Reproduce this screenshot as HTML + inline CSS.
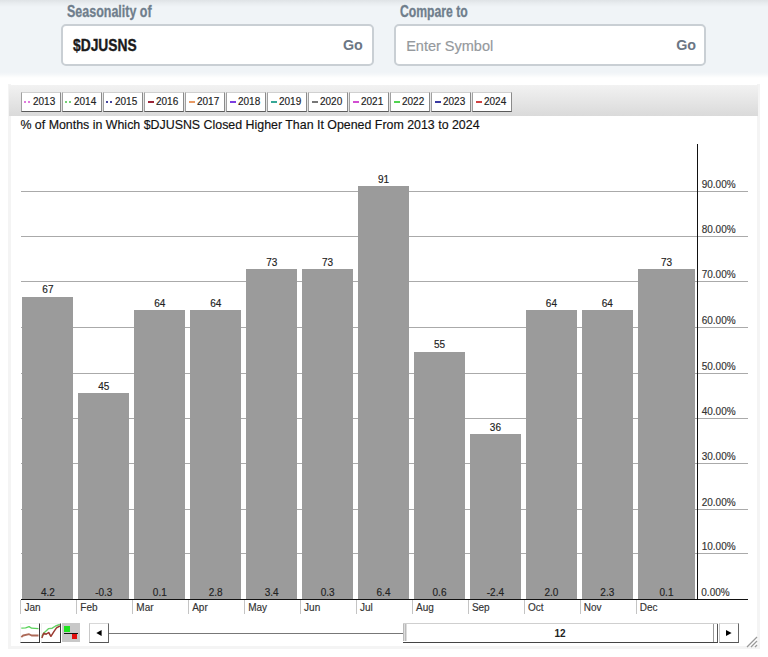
<!DOCTYPE html>
<html><head><meta charset="utf-8"><style>
*{margin:0;padding:0;box-sizing:border-box}
html,body{width:768px;height:657px;overflow:hidden;background:#fff;font-family:"Liberation Sans",sans-serif}
.a{position:absolute;white-space:nowrap;line-height:1}
.t{-webkit-text-stroke:0.15px currentColor}
</style></head><body>

<div class="a" style="left:0;top:0;width:768px;height:75px;background:linear-gradient(#dfe3e6 0px,#e9edf0 3.5px,#f0f4f7 7px,#f0f4f7 72px,#f6f8fa 75px)"></div>
<div class="a" style="left:0;top:75px;width:768px;height:3px;background:linear-gradient(#f7f9fa,#fff)"></div>
<div class="a" style="left:66.6px;top:3.96px;font-size:16px;font-weight:bold;color:#6f7e8c;-webkit-text-stroke:0.3px #6f7e8c;transform:scaleX(0.78);transform-origin:0 0">Seasonality of</div>
<div class="a" style="left:399.8px;top:3.96px;font-size:16px;font-weight:bold;color:#6f7e8c;-webkit-text-stroke:0.3px #6f7e8c;transform:scaleX(0.762);transform-origin:0 0">Compare to</div>
<div class="a" style="left:61px;top:24px;width:313px;height:42px;background:#fff;border:2px solid #c9cfd4;border-radius:5px"></div>
<div class="a" style="left:394px;top:24px;width:312px;height:42px;background:#fff;border:2px solid #c9cfd4;border-radius:5px"></div>
<div class="a" style="left:73px;top:38.29px;font-size:15.6px;font-weight:bold;color:#1b1b1b;-webkit-text-stroke:0.35px #1b1b1b;transform:scaleX(0.885);transform-origin:0 0">$DJUSNS</div>
<div class="a" style="left:343.0px;top:38.00px;font-size:14.3px;font-weight:bold;color:#6b7684;transform:scaleX(1.0);transform-origin:0 0">Go</div>
<div class="a" style="left:676.2px;top:38.00px;font-size:14.3px;font-weight:bold;color:#6b7684;transform:scaleX(1.0);transform-origin:0 0">Go</div>
<div class="a" style="left:406.2px;top:38.93px;font-size:14.5px;color:#95999d;-webkit-text-stroke:0.2px #95999d">Enter Symbol</div>
<div class="a" style="left:8px;top:84px;width:752px;height:565px;border:3px solid #f4f4f4;border-top:0;background:#fff"></div>
<div class="a" style="left:9px;top:84.5px;width:749px;height:31.3px;background:linear-gradient(#f2f2f2,#dadada)"></div>
<div class="a" style="left:20.5px;top:92px;width:40px;height:20px;background:#fff;border:1px solid;border-color:#d0d0d0 #8a8a8a #5a5a5a #a0a0a0"></div>
<div class="a" style="left:24.1px;top:100.8px;width:1.8px;height:1.8px;background:#e07ade"></div>
<div class="a" style="left:28.1px;top:100.8px;width:1.8px;height:1.8px;background:#e07ade"></div>
<div class="a t" style="left:33.0px;top:97.03px;font-size:10px;color:#222">2013</div>
<div class="a" style="left:61.5px;top:92px;width:40px;height:20px;background:#fff;border:1px solid;border-color:#d0d0d0 #8a8a8a #5a5a5a #a0a0a0"></div>
<div class="a" style="left:65.1px;top:100.8px;width:1.8px;height:1.8px;background:#74d074"></div>
<div class="a" style="left:69.1px;top:100.8px;width:1.8px;height:1.8px;background:#74d074"></div>
<div class="a t" style="left:74.0px;top:97.03px;font-size:10px;color:#222">2014</div>
<div class="a" style="left:102.5px;top:92px;width:40px;height:20px;background:#fff;border:1px solid;border-color:#d0d0d0 #8a8a8a #5a5a5a #a0a0a0"></div>
<div class="a" style="left:106.1px;top:100.8px;width:1.8px;height:1.8px;background:#45459e"></div>
<div class="a" style="left:110.1px;top:100.8px;width:1.8px;height:1.8px;background:#45459e"></div>
<div class="a t" style="left:115.0px;top:97.03px;font-size:10px;color:#222">2015</div>
<div class="a" style="left:143.5px;top:92px;width:40px;height:20px;background:#fff;border:1px solid;border-color:#d0d0d0 #8a8a8a #5a5a5a #a0a0a0"></div>
<div class="a" style="left:148.3px;top:100.8px;width:5.8px;height:2px;background:#9b2437"></div>
<div class="a t" style="left:156.0px;top:97.03px;font-size:10px;color:#222">2016</div>
<div class="a" style="left:184.5px;top:92px;width:40px;height:20px;background:#fff;border:1px solid;border-color:#d0d0d0 #8a8a8a #5a5a5a #a0a0a0"></div>
<div class="a" style="left:189.3px;top:100.8px;width:5.8px;height:2px;background:#e99a64"></div>
<div class="a t" style="left:197.0px;top:97.03px;font-size:10px;color:#222">2017</div>
<div class="a" style="left:225.5px;top:92px;width:40px;height:20px;background:#fff;border:1px solid;border-color:#d0d0d0 #8a8a8a #5a5a5a #a0a0a0"></div>
<div class="a" style="left:230.3px;top:100.8px;width:5.8px;height:2px;background:#7d3ee0"></div>
<div class="a t" style="left:238.0px;top:97.03px;font-size:10px;color:#222">2018</div>
<div class="a" style="left:266.5px;top:92px;width:40px;height:20px;background:#fff;border:1px solid;border-color:#d0d0d0 #8a8a8a #5a5a5a #a0a0a0"></div>
<div class="a" style="left:271.3px;top:100.8px;width:5.8px;height:2px;background:#36a796"></div>
<div class="a t" style="left:279.0px;top:97.03px;font-size:10px;color:#222">2019</div>
<div class="a" style="left:307.5px;top:92px;width:40px;height:20px;background:#fff;border:1px solid;border-color:#d0d0d0 #8a8a8a #5a5a5a #a0a0a0"></div>
<div class="a" style="left:312.3px;top:100.8px;width:5.8px;height:2px;background:#777777"></div>
<div class="a t" style="left:320.0px;top:97.03px;font-size:10px;color:#222">2020</div>
<div class="a" style="left:348.5px;top:92px;width:40px;height:20px;background:#fff;border:1px solid;border-color:#d0d0d0 #8a8a8a #5a5a5a #a0a0a0"></div>
<div class="a" style="left:353.3px;top:100.8px;width:5.8px;height:2px;background:#d24ed2"></div>
<div class="a t" style="left:361.0px;top:97.03px;font-size:10px;color:#222">2021</div>
<div class="a" style="left:389.5px;top:92px;width:40px;height:20px;background:#fff;border:1px solid;border-color:#d0d0d0 #8a8a8a #5a5a5a #a0a0a0"></div>
<div class="a" style="left:394.3px;top:100.8px;width:5.8px;height:2px;background:#50d450"></div>
<div class="a t" style="left:402.0px;top:97.03px;font-size:10px;color:#222">2022</div>
<div class="a" style="left:430.5px;top:92px;width:40px;height:20px;background:#fff;border:1px solid;border-color:#d0d0d0 #8a8a8a #5a5a5a #a0a0a0"></div>
<div class="a" style="left:435.3px;top:100.8px;width:5.8px;height:2px;background:#3a3aa2"></div>
<div class="a t" style="left:443.0px;top:97.03px;font-size:10px;color:#222">2023</div>
<div class="a" style="left:471.5px;top:92px;width:40px;height:20px;background:#fff;border:1px solid;border-color:#d0d0d0 #8a8a8a #5a5a5a #a0a0a0"></div>
<div class="a" style="left:476.3px;top:100.8px;width:5.8px;height:2px;background:#cf4242"></div>
<div class="a t" style="left:484.0px;top:97.03px;font-size:10px;color:#222">2024</div>
<div class="a t" style="left:20.4px;top:118.50px;font-size:12.4px;color:#111">% of Months in Which $DJUSNS Closed Higher Than It Opened From 2013 to 2024</div>
<div class="a" style="left:21px;top:553px;width:726.5px;height:1px;background:#aaaaaa"></div>
<div class="a t" style="left:701.7px;top:542.33px;font-size:10px;color:#333">10.00%</div>
<div class="a" style="left:21px;top:509px;width:726.5px;height:1px;background:#aaaaaa"></div>
<div class="a t" style="left:701.7px;top:498.34px;font-size:10px;color:#333">20.00%</div>
<div class="a" style="left:21px;top:463px;width:726.5px;height:1px;background:#aaaaaa"></div>
<div class="a t" style="left:701.7px;top:452.34px;font-size:10px;color:#333">30.00%</div>
<div class="a" style="left:21px;top:418px;width:726.5px;height:1px;background:#aaaaaa"></div>
<div class="a t" style="left:701.7px;top:407.34px;font-size:10px;color:#333">40.00%</div>
<div class="a" style="left:21px;top:373px;width:726.5px;height:1px;background:#aaaaaa"></div>
<div class="a t" style="left:701.7px;top:362.34px;font-size:10px;color:#333">50.00%</div>
<div class="a" style="left:21px;top:327px;width:726.5px;height:1px;background:#aaaaaa"></div>
<div class="a t" style="left:701.7px;top:316.34px;font-size:10px;color:#333">60.00%</div>
<div class="a" style="left:21px;top:281px;width:726.5px;height:1px;background:#aaaaaa"></div>
<div class="a t" style="left:701.7px;top:270.34px;font-size:10px;color:#333">70.00%</div>
<div class="a" style="left:21px;top:236px;width:726.5px;height:1px;background:#aaaaaa"></div>
<div class="a t" style="left:701.7px;top:225.34px;font-size:10px;color:#333">80.00%</div>
<div class="a" style="left:21px;top:191px;width:726.5px;height:1px;background:#aaaaaa"></div>
<div class="a t" style="left:701.7px;top:180.34px;font-size:10px;color:#333">90.00%</div>
<div class="a t" style="left:701.3px;top:588.33px;font-size:10px;color:#333">0.00%</div>
<div class="a" style="left:22.40px;top:296.58px;width:51.0px;height:302.42px;background:#9b9b9b"></div>
<div class="a t" style="left:27.9px;top:285.42px;width:40px;text-align:center;font-size:10px;color:#222">67</div>
<div class="a t" style="left:27.9px;top:587.74px;width:40px;text-align:center;font-size:10px;color:#222">4.2</div>
<div class="a" style="left:20.3px;top:600px;width:1px;height:14px;background:#c4c4c4"></div>
<div class="a t" style="left:24.4px;top:603.24px;font-size:10px;color:#333">Jan</div>
<div class="a" style="left:78.34px;top:392.97px;width:51.0px;height:206.03px;background:#9b9b9b"></div>
<div class="a t" style="left:83.8px;top:381.80px;width:40px;text-align:center;font-size:10px;color:#222">45</div>
<div class="a t" style="left:83.8px;top:587.74px;width:40px;text-align:center;font-size:10px;color:#222">-0.3</div>
<div class="a" style="left:76.2px;top:600px;width:1px;height:14px;background:#c4c4c4"></div>
<div class="a t" style="left:80.3px;top:603.24px;font-size:10px;color:#333">Feb</div>
<div class="a" style="left:134.28px;top:310.35px;width:51.0px;height:288.65px;background:#9b9b9b"></div>
<div class="a t" style="left:139.8px;top:299.18px;width:40px;text-align:center;font-size:10px;color:#222">64</div>
<div class="a t" style="left:139.8px;top:587.74px;width:40px;text-align:center;font-size:10px;color:#222">0.1</div>
<div class="a" style="left:132.2px;top:600px;width:1px;height:14px;background:#c4c4c4"></div>
<div class="a t" style="left:136.3px;top:603.24px;font-size:10px;color:#333">Mar</div>
<div class="a" style="left:190.22px;top:310.35px;width:51.0px;height:288.65px;background:#9b9b9b"></div>
<div class="a t" style="left:195.7px;top:299.18px;width:40px;text-align:center;font-size:10px;color:#222">64</div>
<div class="a t" style="left:195.7px;top:587.74px;width:40px;text-align:center;font-size:10px;color:#222">2.8</div>
<div class="a" style="left:188.1px;top:600px;width:1px;height:14px;background:#c4c4c4"></div>
<div class="a t" style="left:192.2px;top:603.24px;font-size:10px;color:#333">Apr</div>
<div class="a" style="left:246.16px;top:269.06px;width:51.0px;height:329.94px;background:#9b9b9b"></div>
<div class="a t" style="left:251.7px;top:257.90px;width:40px;text-align:center;font-size:10px;color:#222">73</div>
<div class="a t" style="left:251.7px;top:587.74px;width:40px;text-align:center;font-size:10px;color:#222">3.4</div>
<div class="a" style="left:244.1px;top:600px;width:1px;height:14px;background:#c4c4c4"></div>
<div class="a t" style="left:248.2px;top:603.24px;font-size:10px;color:#333">May</div>
<div class="a" style="left:302.10px;top:269.06px;width:51.0px;height:329.94px;background:#9b9b9b"></div>
<div class="a t" style="left:307.6px;top:257.90px;width:40px;text-align:center;font-size:10px;color:#222">73</div>
<div class="a t" style="left:307.6px;top:587.74px;width:40px;text-align:center;font-size:10px;color:#222">0.3</div>
<div class="a" style="left:300.0px;top:600px;width:1px;height:14px;background:#c4c4c4"></div>
<div class="a t" style="left:304.1px;top:603.24px;font-size:10px;color:#333">Jun</div>
<div class="a" style="left:358.04px;top:186.49px;width:51.0px;height:412.51px;background:#9b9b9b"></div>
<div class="a t" style="left:363.5px;top:175.32px;width:40px;text-align:center;font-size:10px;color:#222">91</div>
<div class="a t" style="left:363.5px;top:587.74px;width:40px;text-align:center;font-size:10px;color:#222">6.4</div>
<div class="a" style="left:355.9px;top:600px;width:1px;height:14px;background:#c4c4c4"></div>
<div class="a t" style="left:360.0px;top:603.24px;font-size:10px;color:#333">Jul</div>
<div class="a" style="left:413.98px;top:351.63px;width:51.0px;height:247.37px;background:#9b9b9b"></div>
<div class="a t" style="left:419.5px;top:340.47px;width:40px;text-align:center;font-size:10px;color:#222">55</div>
<div class="a t" style="left:419.5px;top:587.74px;width:40px;text-align:center;font-size:10px;color:#222">0.6</div>
<div class="a" style="left:411.9px;top:600px;width:1px;height:14px;background:#c4c4c4"></div>
<div class="a t" style="left:416.0px;top:603.24px;font-size:10px;color:#333">Aug</div>
<div class="a" style="left:469.92px;top:434.25px;width:51.0px;height:164.75px;background:#9b9b9b"></div>
<div class="a t" style="left:475.4px;top:423.09px;width:40px;text-align:center;font-size:10px;color:#222">36</div>
<div class="a t" style="left:475.4px;top:587.74px;width:40px;text-align:center;font-size:10px;color:#222">-2.4</div>
<div class="a" style="left:467.8px;top:600px;width:1px;height:14px;background:#c4c4c4"></div>
<div class="a t" style="left:471.9px;top:603.24px;font-size:10px;color:#333">Sep</div>
<div class="a" style="left:525.86px;top:310.35px;width:51.0px;height:288.65px;background:#9b9b9b"></div>
<div class="a t" style="left:531.4px;top:299.18px;width:40px;text-align:center;font-size:10px;color:#222">64</div>
<div class="a t" style="left:531.4px;top:587.74px;width:40px;text-align:center;font-size:10px;color:#222">2.0</div>
<div class="a" style="left:523.8px;top:600px;width:1px;height:14px;background:#c4c4c4"></div>
<div class="a t" style="left:527.9px;top:603.24px;font-size:10px;color:#333">Oct</div>
<div class="a" style="left:581.80px;top:310.35px;width:51.0px;height:288.65px;background:#9b9b9b"></div>
<div class="a t" style="left:587.3px;top:299.18px;width:40px;text-align:center;font-size:10px;color:#222">64</div>
<div class="a t" style="left:587.3px;top:587.74px;width:40px;text-align:center;font-size:10px;color:#222">2.3</div>
<div class="a" style="left:579.7px;top:600px;width:1px;height:14px;background:#c4c4c4"></div>
<div class="a t" style="left:583.8px;top:603.24px;font-size:10px;color:#333">Nov</div>
<div class="a" style="left:637.74px;top:269.06px;width:57.5px;height:329.94px;background:#9b9b9b"></div>
<div class="a t" style="left:646.5px;top:257.90px;width:40px;text-align:center;font-size:10px;color:#222">73</div>
<div class="a t" style="left:646.5px;top:587.74px;width:40px;text-align:center;font-size:10px;color:#222">0.1</div>
<div class="a" style="left:635.6px;top:600px;width:1px;height:14px;background:#c4c4c4"></div>
<div class="a t" style="left:639.7px;top:603.24px;font-size:10px;color:#333">Dec</div>
<div class="a" style="left:696.8px;top:144px;width:1.3px;height:456px;background:#111"></div>
<div class="a" style="left:20.5px;top:598.9px;width:727.5px;height:1.3px;background:#111"></div>
<div class="a" style="left:20.1px;top:623.2px;width:20px;height:19.6px;background:#fff;border-right:1.3px solid #3a3a3a;border-bottom:1.3px solid #3a3a3a;border-left:1px solid #f2f2f2;border-top:1px solid #f2f2f2"></div>
<svg class="a" style="left:20.1px;top:623.4px" width="20" height="19"><polyline points="1.3,5.2 5.6,4.8 9.1,3.6 11.6,5.2 18.5,5.6" fill="none" stroke="#5ad25a" stroke-width="1.3" stroke-linejoin="round"/><polyline points="1.3,14.2 3.1,12.5 9.1,11.2 11.6,12.5 18.5,12.5" fill="none" stroke="#ad6a58" stroke-width="1.8" stroke-linejoin="round"/></svg>
<div class="a" style="left:41.2px;top:623.2px;width:20px;height:19.6px;background:#fff;border-right:1.3px solid #3a3a3a;border-bottom:1.3px solid #3a3a3a;border-left:1px solid #f2f2f2;border-top:1px solid #f2f2f2"></div>
<svg class="a" style="left:41.2px;top:623.4px" width="20" height="19"><polyline points="0.85,13.3 3.4,9.5 7.7,5.6 11.2,5.2 14.6,3.0 18.9,1.3" fill="none" stroke="#66d066" stroke-width="1.4" stroke-linejoin="round"/><polyline points="0.85,15.1 2.6,10.3 5.2,11.2 7.7,9.5 9.9,13.3 12.9,8.6 15.5,4.8 18.9,3.0" fill="none" stroke="#9a3a30" stroke-width="1.5" stroke-linejoin="round"/></svg>
<div class="a" style="left:61.8px;top:623.2px;width:18.3px;height:18.6px;background:#c8c8c8"><div class="a" style="left:2.2px;top:2.6px;width:6px;height:5.8px;background:#1ee41e"></div><div class="a" style="left:2.2px;top:9.4px;width:13.7px;height:1.2px;background:#111"></div><div class="a" style="left:9.9px;top:10.4px;width:5.6px;height:5.2px;background:#e20c0c"></div></div>
<div class="a" style="left:89.2px;top:623.2px;width:20.1px;height:19.6px;background:#fff;border:1px solid;border-color:#d8d8d8 #666 #555 #c8c8c8"></div>
<svg class="a" style="left:95.9px;top:629.8px" width="6" height="7"><polygon points="0.3,3 5.6,0 5.6,6" fill="#000"/></svg>
<div class="a" style="left:109px;top:632.8px;width:294px;height:1px;background:#777"></div>
<div class="a" style="left:402.5px;top:623.2px;width:315px;height:19.5px;background:#fff;border-top:1px solid #cfcfcf;border-bottom:1.3px solid #444"></div>
<div class="a" style="left:402.5px;top:624.2px;width:4.5px;height:17px;background:repeating-linear-gradient(90deg,#bbb 0,#bbb 1px,#ddd 1px,#ddd 2px)"></div>
<div class="a" style="left:713px;top:624.2px;width:4.5px;height:18px;border-left:1px solid #999;border-right:1.3px solid #555"></div>
<div class="a" style="left:540px;top:628.93px;width:40px;text-align:center;font-size:10px;font-weight:bold;color:#222">12</div>
<div class="a" style="left:719.4px;top:623.2px;width:19.8px;height:19.6px;background:#fff;border:1px solid;border-color:#d8d8d8 #666 #555 #c8c8c8"></div>
<svg class="a" style="left:725.9px;top:629.6px" width="6" height="7"><polygon points="0,0 5.6,3 0,6" fill="#000"/></svg>
<svg class="a" style="left:746px;top:636px" width="12" height="12"><path d="M1,11 L11,1 M5,11 L11,5 M9,11 L11,9" stroke="#999" stroke-width="1.3"/></svg>
</body></html>
